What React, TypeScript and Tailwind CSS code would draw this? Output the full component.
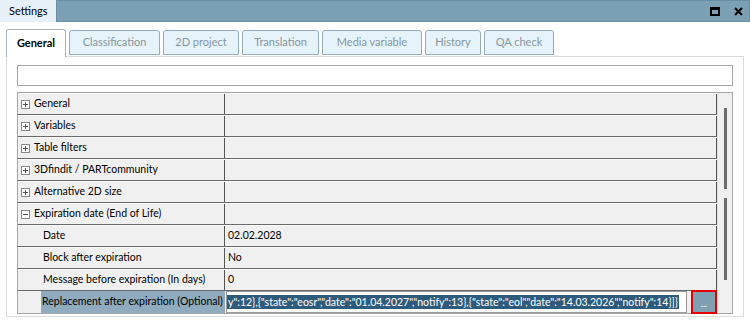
import React from "react";

const tabs = [
  "General",
  "Classification",
  "2D project",
  "Translation",
  "Media variable",
  "History",
  "QA check",
];

const tabWidths = [60, 91, 76, 77, 100, 56, 70];

type Row = { label: string; value?: string; child?: boolean; open?: boolean };

const rows: Row[] = [
  { label: "General" },
  { label: "Variables" },
  { label: "Table filters" },
  { label: "3Dfindit / PARTcommunity" },
  { label: "Alternative 2D size" },
  { label: "Expiration date (End of Life)", open: true },
  { label: "Date", value: "02.02.2028", child: true },
  { label: "Block after expiration", value: "No", child: true },
  { label: "Message before expiration (In days)", value: "0", child: true },
];

function Expander({ open }: { open?: boolean }) {
  return (
    <svg width="9" height="9" viewBox="0 0 9 9" className="shrink-0">
      <rect x="0.5" y="0.5" width="8" height="8" fill="#fff" stroke="#8a8a8a" />
      <line x1="2" y1="4.5" x2="7" y2="4.5" stroke="#555" />
      {!open && <line x1="4.5" y1="2" x2="4.5" y2="7" stroke="#555" />}
    </svg>
  );
}

export default function App() {
  return (
    <div
      className="w-[750px] h-[322px] bg-white text-[10.5px] text-black overflow-hidden"
      style={{ fontFamily: 'Lato, "Open Sans", sans-serif' }}
    >
      {/* title bar */}
      <div className="flex h-[22px]">
        <div className="w-[56px] bg-[#e6f0f6] pl-[9px] flex items-center text-[11px] text-black">
          Settings
        </div>
        <div className="flex-1 bg-[#7b9fb3] border border-[#6a8ea3] flex items-center justify-end gap-[14px] pr-[6px]">
          <div className="w-[10px] h-[9px] border-2 border-black border-t-[3px]" />
          <svg width="9" height="9" viewBox="0 0 9 9">
            <path d="M1 1 L8 8 M8 1 L1 8" stroke="#000" strokeWidth="2" />
          </svg>
        </div>
      </div>

      {/* tabs */}
      <div className="flex items-end h-[34px] pl-[6px] gap-[3px] text-[11px]">
        {tabs.map((t, i) =>
          i === 0 ? (
            <div
              key={t}
              style={{ width: tabWidths[i] }}
              className="h-[28px] -mb-px z-10 bg-white border border-b-0 border-[#a9b3ba] rounded-t-[3px] flex items-center justify-center font-bold text-black"
            >
              {t}
            </div>
          ) : (
            <div
              key={t}
              style={{ width: tabWidths[i] }}
              className="h-[25px] mb-[1px] bg-[#e6f3fa] border border-[#93adbd] rounded-t-[3px] flex items-center justify-center text-[#8796a0]"
            >
              {t}
            </div>
          ),
        )}
      </div>

      {/* panel */}
      <div className="mx-[6px] h-[261px] border border-[#dcdcdc] bg-white px-[10px] pt-[8px]">
        <div className="h-[21px] border border-[#a6a6a6] bg-white" />
        <div className="mt-[6px] h-[222px] border border-[#a6a6a6] flex bg-[#f0f0f0]">
          <div className="flex-1 flex flex-col">
            {rows.map((r) => (
              <div
                key={r.label}
                className="flex h-[22px] border-b border-[#6a6a6a] border-t border-t-[#fafafa]"
              >
                <div
                  className={
                    "w-[207px] flex items-center gap-[4px] border-r border-[#555] " +
                    (r.child ? "pl-[25px]" : "pl-[3px]")
                  }
                >
                  {!r.child && <Expander open={r.open} />}
                  <span className="whitespace-nowrap">{r.label}</span>
                </div>
                <div className="flex-1 flex items-center pl-[3px] border-r border-[#555]">
                  {r.value}
                </div>
              </div>
            ))}
            {/* editing row */}
            <div className="flex h-[22px] items-stretch">
              <div className="w-[23px] bg-[#f0f0f0]" />
              <div className="w-[184px] bg-[#8fabbd] flex items-center pl-[1px] whitespace-nowrap overflow-hidden">
                Replacement after expiration (Optional)
              </div>
              <div className="flex-1 flex items-center gap-[4px] pl-[1px]">
                <div className="w-[461px] h-[22px] bg-white border border-[#9a9a9a] flex items-center overflow-hidden">
                  <span className="bg-[#2e5b7b] text-white whitespace-nowrap leading-[14px] px-[1px]">
                    {'y":12},{"state":"eosr","date":"01.04.2027","notify":13},{"state":"eol","date":"14.03.2026","notify":14}]}'}
                  </span>
                </div>
                <div className="w-[26px] h-[24px] shrink-0 border-2 border-[#e50000] bg-[#7f9fb3] flex items-end justify-center pb-[4px] text-white text-[9px] leading-none">
                  ...
                </div>
              </div>
            </div>
          </div>
          <div className="w-[17px] bg-[#f0f0f0] border-l border-[#e0e0e0] relative">
            <div className="absolute left-[6px] top-[15px] w-[3px] h-[81px] bg-[#6d6d6d]" />
            <div className="absolute left-[6px] top-[105px] w-[3px] h-[82px] bg-[#6d6d6d]" />
          </div>
        </div>
      </div>
    </div>
  );
}
